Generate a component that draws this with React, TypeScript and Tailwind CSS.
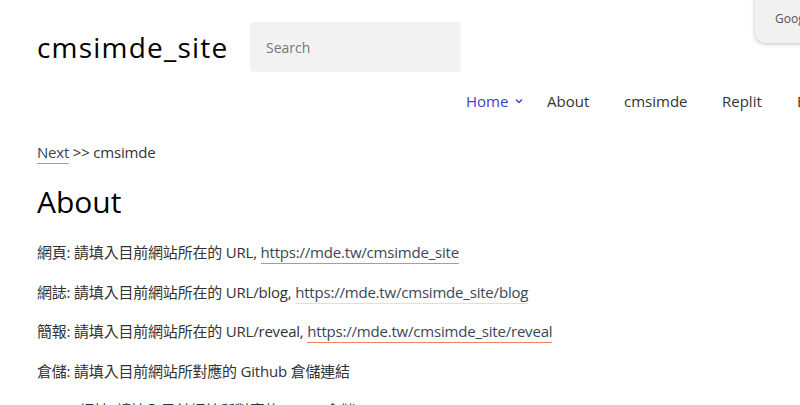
import React from "react";

const font = { fontFamily: "'Open Sans', 'Noto Sans CJK TC', sans-serif" };

function Link({ children, pale }: { children: React.ReactNode; pale?: boolean }) {
  return (
    <a
      className={
        pale
          ? "text-[#3b4656] border-b border-[#f9d6ca] pb-[1px]"
          : "text-[#3b4656] border-b border-[#f0845c] pb-[1px]"
      }
    >
      {children}
    </a>
  );
}

export default function App() {
  return (
    <div className="relative w-[800px] h-[405px] overflow-hidden bg-white text-[#222]" style={font}>
      <div className="absolute right-[-20px] top-[-10px] w-[65px] h-[53px] bg-[#f1f1f1] rounded-[10px] shadow-[0_1px_4px_rgba(0,0,0,0.25)] pl-[20px] pt-[21px] text-[12px] leading-[16px] text-[#555] whitespace-nowrap">
        Google
      </div>
      <header className="flex items-center pl-[37px] pt-[22px]">
        <div className="text-[28px] text-black tracking-[1.2px] w-[213px] leading-none">cmsimde_site</div>
        <div className="w-[211px] h-[50px] bg-[#f2f2f2] rounded-[3px] flex items-center pl-[16px] text-[14px] text-[#777]">
          Search
        </div>
      </header>
      <nav className="flex items-center pl-[466px] mt-[19px] h-[20px] text-[15px] text-[#333] whitespace-nowrap">
        <span className="w-[81px] shrink-0 text-[#4040c8] flex items-center">
          Home
          <svg className="ml-[7px]" width="8" height="6" viewBox="0 0 8 6">
            <path d="M1 1.5 L4 4.5 L7 1.5" stroke="#4040c8" strokeWidth="1.4" fill="none" />
          </svg>
        </span>
        <span className="w-[77px] shrink-0">About</span>
        <span className="w-[98px] shrink-0">cmsimde</span>
        <span className="w-[75px] shrink-0">Replit</span>
        <span className="shrink-0">Brython</span>
      </nav>
      <main className="pl-[37px] pt-[31px] text-[15px]">
        <div className="text-[#333] leading-[20px] tracking-[-0.2px]">
          <Link>Next</Link> &gt;&gt; cmsimde
        </div>
        <h1 className="text-[30px] text-black mt-[22px] leading-[36px]">About</h1>
        <div className="mt-[22px] flex flex-col gap-[19.5px] leading-[20px] text-[#333] tracking-[-0.2px]">
          <p>
            網頁: 請填入目前網站所在的 URL, <Link>https://mde.tw/cmsimde_site</Link>
          </p>
          <p>
            網誌: 請填入目前網站所在的 URL/blog, <Link pale>https://mde.tw/cmsimde_site/blog</Link>
          </p>
          <p>
            簡報: 請填入目前網站所在的 URL/reveal, <Link>https://mde.tw/cmsimde_site/reveal</Link>
          </p>
          <p>倉儲: 請填入目前網站所對應的 Github 倉儲連結</p>
          <p>Replit 網址: 請填入目前網站所對應的 Replit 倉儲</p>
        </div>
      </main>
    </div>
  );
}
